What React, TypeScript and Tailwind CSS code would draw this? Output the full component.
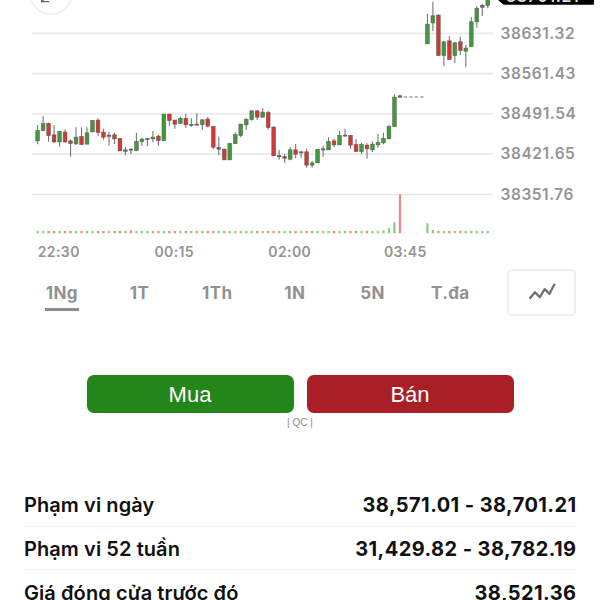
import { useState } from 'react';

type Candle = {
  slot: number;
  high: number;
  top: number;
  bottom: number;
  low: number;
  kind: 'up' | 'down' | 'flat';
};

const STEP = 5.49;
const START_X = 37.6;
const BASELINE = 233.3;

const COLORS = {
  up: '#43983f',
  down: '#cf3a36',
  flat: '#6a6464',
};

const KINDS: Record<string, Candle['kind']> = { g: 'up', r: 'down', n: 'flat' };

// slot, high, body top, body bottom, low, kind
const rows: [number, number, number, number, number, string][] = [
  [0, 125, 130.3, 141, 144.3, 'g'],
  [1, 116, 123.5, 130.7, 131.3, 'g'],
  [2, 122.7, 123.3, 135.7, 141.7, 'r'],
  [3, 125.3, 134.7, 142, 143, 'r'],
  [4, 131, 131.3, 142, 146.7, 'g'],
  [5, 129.3, 132, 142, 142.7, 'r'],
  [6, 139.3, 140.8, 143.7, 156.7, 'r'],
  [7, 127.3, 137, 144, 145, 'g'],
  [8, 127.3, 136.3, 144.7, 144.7, 'r'],
  [9, 127.3, 132.7, 144.3, 144.3, 'g'],
  [10, 120.3, 120.3, 132, 132.3, 'g'],
  [11, 118.3, 120, 132.7, 136, 'r'],
  [12, 128.7, 132, 137.3, 139.7, 'r'],
  [13, 131.7, 135, 136.5, 145.7, 'n'],
  [14, 132.7, 134.7, 139, 144, 'r'],
  [15, 138, 138.3, 151, 151, 'r'],
  [16, 146.7, 149.7, 151.5, 155.3, 'g'],
  [17, 148.3, 149, 150.3, 154.3, 'n'],
  [18, 132.7, 141.3, 150.7, 151, 'g'],
  [19, 137.7, 139, 141.7, 146, 'g'],
  [20, 138, 138.5, 139.7, 146.3, 'n'],
  [21, 131, 137, 139, 142.3, 'g'],
  [22, 134.7, 136, 140.7, 145.7, 'r'],
  [23, 114, 114, 140.7, 141, 'g'],
  [24, 113.7, 114, 120.7, 125.7, 'r'],
  [25, 119.7, 120, 124.3, 128.7, 'r'],
  [26, 117, 118.3, 123.5, 124, 'g'],
  [27, 114, 118.3, 125, 127.7, 'r'],
  [28, 118.3, 124.3, 125.7, 126.7, 'g'],
  [29, 113.3, 124, 125.3, 125.3, 'r'],
  [30, 119, 119.7, 124.7, 129.7, 'g'],
  [31, 117, 119, 126.3, 127.3, 'r'],
  [32, 126, 126.3, 147.3, 149.3, 'r'],
  [33, 136.7, 147.3, 149.3, 155.3, 'n'],
  [34, 148.7, 149, 160, 160, 'r'],
  [35, 143, 143.3, 160, 160, 'g'],
  [36, 132.3, 134.3, 143.7, 143.7, 'g'],
  [37, 123.7, 124, 135.7, 137.3, 'g'],
  [38, 117.7, 119.3, 125, 130, 'g'],
  [39, 110.3, 110.7, 119.7, 120.7, 'g'],
  [40, 110.3, 110.7, 117.3, 119.7, 'r'],
  [41, 108, 112, 117.3, 117.7, 'g'],
  [42, 110.7, 112.3, 127.7, 129.7, 'r'],
  [43, 126.3, 127, 156, 156, 'r'],
  [44, 149.7, 155.3, 157, 159.7, 'n'],
  [45, 154, 156.5, 158.5, 163, 'n'],
  [46, 147, 149.7, 159.3, 160.3, 'g'],
  [47, 144, 149.7, 154.3, 158, 'r'],
  [48, 151, 151.7, 153, 158, 'n'],
  [49, 148.7, 151.7, 165.3, 167.7, 'r'],
  [50, 161, 162.8, 165.3, 167.7, 'g'],
  [51, 149, 149.3, 163, 163, 'g'],
  [52, 146, 148.7, 150, 156.7, 'n'],
  [53, 137.3, 141.3, 150, 150, 'g'],
  [54, 139, 140.7, 145, 147, 'r'],
  [55, 131, 135.3, 145, 145, 'g'],
  [56, 128.7, 135, 136, 136.7, 'n'],
  [57, 135, 135.3, 145.3, 149, 'r'],
  [58, 139, 144.3, 151.7, 151.7, 'r'],
  [59, 142.7, 144.3, 151.7, 154, 'g'],
  [60, 143.3, 145, 149, 158.7, 'r'],
  [61, 141.3, 144, 150, 152, 'g'],
  [62, 133.7, 142.3, 145, 147.7, 'g'],
  [63, 132.7, 138.3, 143, 144.3, 'g'],
  [64, 124.7, 126.3, 139, 139, 'g'],
  [65, 94.3, 97, 126.7, 126.7, 'g'],
  [66, 94.7, 95.7, 97.3, 98, 'n'],
  [71, 13.7, 24, 44, 44, 'g'],
  [72, 1.7, 15.7, 23, 31, 'g'],
  [73, 14.3, 15, 55.7, 55.7, 'r'],
  [74, 41, 41.7, 55.7, 66, 'g'],
  [75, 36, 40.7, 59.7, 59.7, 'r'],
  [76, 41.7, 42.7, 55.7, 63.3, 'g'],
  [77, 36.7, 41.7, 50.7, 55, 'r'],
  [78, 45, 48, 51.3, 67.3, 'g'],
  [79, 17, 21.7, 46.7, 46.7, 'g'],
  [80, 6, 8.3, 22, 27.7, 'g'],
  [81, 3.7, 5.2, 7.5, 16, 'n'],
  [82, -10, -10, 5.7, 8.3, 'g'],
];

const candles: Candle[] = rows.map(([slot, high, top, bottom, low, kind]) => ({
  slot,
  high,
  top,
  bottom,
  low,
  kind: KINDS[kind],
}));

const tallVolumes: Record<number, number> = { 17: 3, 63: 3, 64: 5.3, 65: 11, 66: 39, 71: 10, 72: 3.5 };
const redVolumes = [66, 17];

const gridLines = [33.4, 73.7, 114, 154.2, 194.5];
const prices = ['38631.32', '38561.43', '38491.54', '38421.65', '38351.76'];
const times = ['22:30', '00:15', '02:00', '03:45'];
const ranges = ['1Ng', '1T', '1Th', '1N', '5N', 'T.đa'];

const stats = [
  { label: 'Phạm vi ngày', value: '38,571.01 - 38,701.21' },
  { label: 'Phạm vi 52 tuần', value: '31,429.82 - 38,782.19' },
  { label: 'Giá đóng cửa trước đó', value: '38,521.36' },
];

function CandleChart() {
  const x = (slot: number) => START_X + slot * STEP;

  return (
    <svg width="496" height="240" viewBox="0 0 496 240" className="block shrink-0">
      {gridLines.map((y) => (
        <line key={y} x1="32" x2="493" y1={y} y2={y} stroke="#e8e8e8" strokeWidth="1.7" />
      ))}

      {/* expand button, cut by the top edge */}
      <circle cx="51" cy="-7" r="21" fill="#fff" stroke="#ededed" strokeWidth="1.5" />
      <path d="M41.7 -6V1.6H49.3M42 1.3L48 -5" fill="none" stroke="#666" strokeWidth="1.4" />

      {candles.map((c) => (
        <g key={c.slot}>
          <line x1={x(c.slot)} x2={x(c.slot)} y1={c.high} y2={c.low} stroke="#777" strokeWidth="1.1" />
          <rect
            x={x(c.slot) - 1.9}
            y={c.top + 0.1}
            width="3.8"
            height={Math.max(c.bottom - c.top - 0.2, 1)}
            fill={COLORS[c.kind]}
            stroke="#4d4a45"
            strokeOpacity="0.7"
            strokeWidth="0.6"
          />
        </g>
      ))}

      {[67, 68, 69, 70].map((slot) => (
        <line key={slot} x1={x(slot) - 1.7} x2={x(slot) + 1.7} y1="97" y2="97" stroke="#808080" strokeWidth="1.1" />
      ))}

      {candles.map((c) => {
        const height = tallVolumes[c.slot] || 2.4;
        return (
          <rect
            key={c.slot}
            x={x(c.slot) - 1.1}
            y={BASELINE - height}
            width="2.2"
            height={height}
            fill={c.kind === 'down' || redVolumes.includes(c.slot) ? '#ee8583' : '#8fc98f'}
          />
        );
      })}
      {[67, 68, 69].map((slot) => (
        <rect key={slot} x={x(slot) - 1} y="232.6" width="2" height="0.7" fill="#d5e3d2" />
      ))}
    </svg>
  );
}

export default function App() {
  const [range, setRange] = useState('1Ng');

  return (
    <div className="h-[600px] w-[600px] overflow-hidden bg-white font-['Inter','Liberation_Sans',sans-serif]">
      <section className="flex h-[240px]">
        <CandleChart />
        <div className="flex flex-1 flex-col">
          <div className="flex h-[13px] items-start">
            <svg width="98" height="5" viewBox="0 0 98 5" className="block overflow-hidden">
              <path d="M1.5 0H98V4.8H9Q7.5 4.8 6.5 3.8L2 0Z" fill="#000" />
              <text x="10" y="1.6" fill="#ddd" fontSize="16" fontWeight="600" letterSpacing="0.6">
                38701.21
              </text>
            </svg>
          </div>
          {prices.map((price) => (
            <div
              key={price}
              className="flex h-[40.3px] items-center pl-[4.5px] text-[15.5px] font-semibold tracking-[0.55px] text-[#949494]"
            >
              {price}
            </div>
          ))}
        </div>
      </section>

      <div className="flex h-6 items-center text-sm font-semibold tracking-[0.4px] text-[#949494]">
        <div className="ml-px flex">
          {times.map((time) => (
            <span key={time} className="w-[115.5px] text-center">
              {time}
            </span>
          ))}
        </div>
      </div>

      <div className="flex h-[55px] items-center pt-px">
        <div className="flex pt-[2px] pl-[23px]">
          {ranges.map((item) => (
            <button
              key={item}
              type="button"
              onClick={() => setRange(item)}
              className="flex w-[77.7px] cursor-pointer justify-center text-[17px] font-bold tracking-[0.4px] text-[#919191]"
            >
              <span
                className={
                  item === range
                    ? 'border-b-[3px] border-[#8e8e8e] px-px pt-[5px] pb-[3px] leading-6'
                    : 'border-b-[3px] border-transparent px-px pt-[5px] pb-[3px] leading-6'
                }
              >
                {item}
              </span>
            </button>
          ))}
        </div>
        <button
          type="button"
          className="ml-[18px] flex h-[47px] w-[69px] cursor-pointer items-center justify-center rounded-[5px] border-2 border-[#efefef]"
        >
          <svg width="30" height="22" viewBox="0 0 30 22" fill="none" stroke="#707070" strokeWidth="2.3">
            <path d="M2.5 17.8L8 11.2L12.8 16.2L17.7 8.2L22.5 12.8L27.7 2.8" strokeLinejoin="round" />
          </svg>
        </button>
      </div>

      <div className="mt-14 flex justify-center gap-[13px] font-['Liberation_Sans',sans-serif] text-[22px] text-white">
        <button type="button" className="h-[38px] w-[207px] cursor-pointer rounded-[7px] bg-[#23861b]">
          Mua
        </button>
        <button type="button" className="h-[38px] w-[207px] cursor-pointer rounded-[7px] bg-[#a91f25]">
          Bán
        </button>
      </div>
      <p className="mt-[3px] text-center font-['Liberation_Sans',sans-serif] text-[10px] leading-[14px] text-[#8c8c8c]">
        | QC |
      </p>

      <div className="mx-6 mt-[53px]">
        {stats.map((stat) => (
          <div
            key={stat.label}
            className="flex h-[43.7px] items-center justify-between border-b border-[#f3f3f3] pt-[2px] text-[20px] text-[#111]"
          >
            <span className="font-semibold tracking-[0.08px]">{stat.label}</span>
            <span className="-mr-[0.5px] font-bold tracking-[0.42px]">{stat.value}</span>
          </div>
        ))}
      </div>
    </div>
  );
}
